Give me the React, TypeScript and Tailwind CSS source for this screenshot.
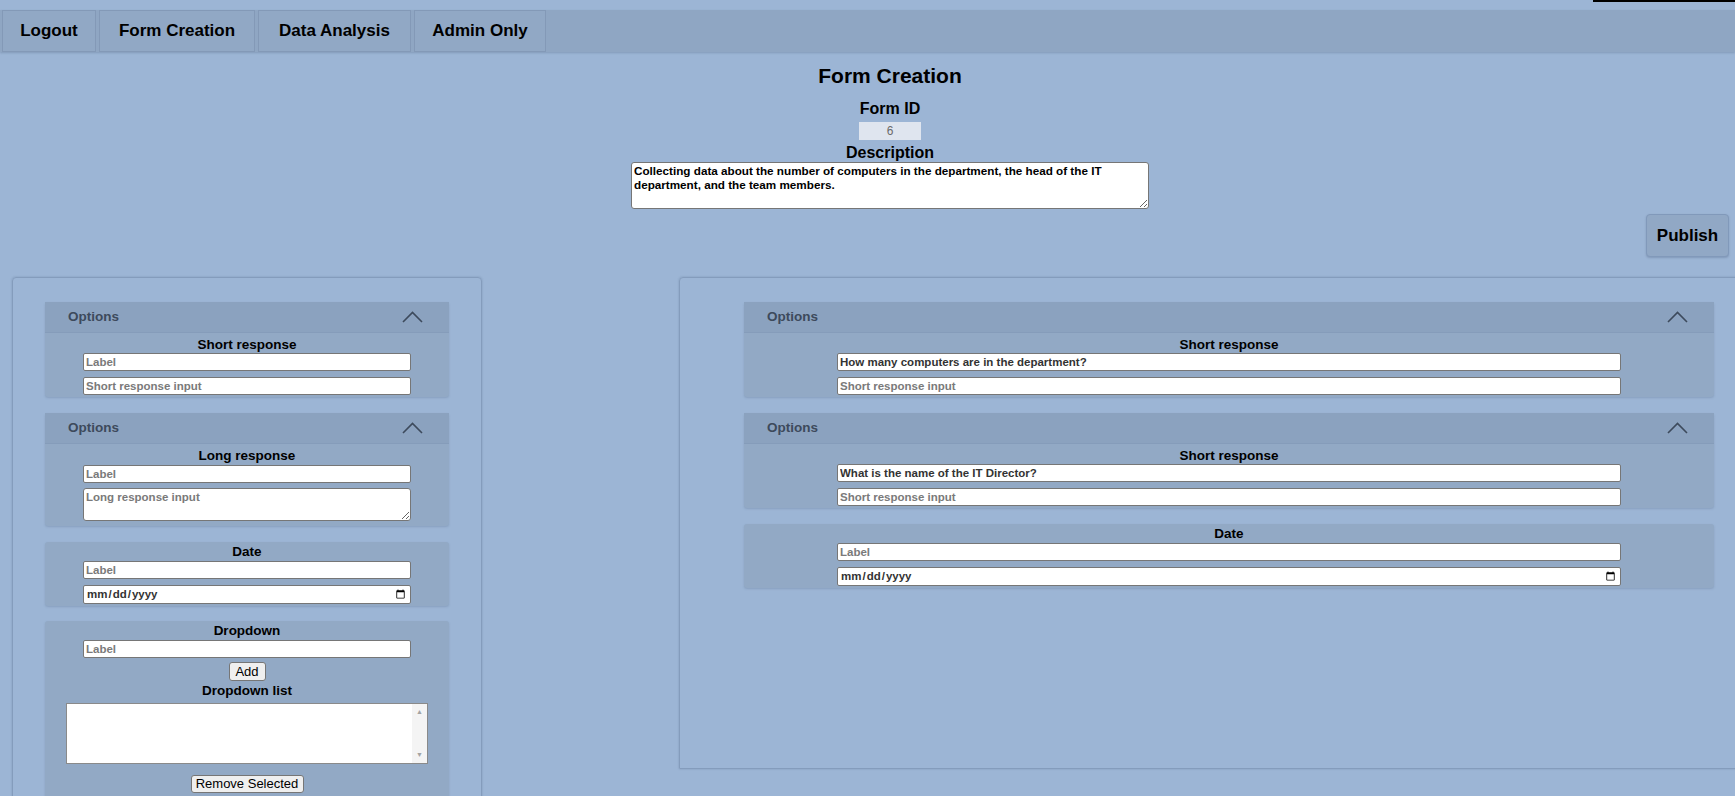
import { useState } from "react";

const navItems = [
  { label: "Logout", w: "w-[94px]" },
  { label: "Form Creation", w: "w-[156px]" },
  { label: "Data Analysis", w: "w-[153px]" },
  { label: "Admin Only", w: "w-[132px]" },
];

const inputCls =
  "block h-[18px] border border-[#767676] rounded-[2px] bg-white px-[2px] text-[11.5px] font-bold text-[#333] placeholder:text-[#7a7a7a] outline-none";

function Chevron() {
  return (
    <svg width="21" height="12" viewBox="0 0 21 12" fill="none">
      <polyline points="1,11 10.5,1.5 20,11" stroke="#3d4a5c" strokeWidth="1.6" />
    </svg>
  );
}

function OptionsHeader() {
  return (
    <div className="flex h-[31px] items-center justify-between bg-[#8ba2bf] pl-[23px] pr-[26px] border-b border-[#859cba]">
      <span className="text-[13.5px] font-bold text-[#3d4a5c]">Options</span>
      <Chevron />
    </div>
  );
}

function Title({ children }: { children: string }) {
  return <div className="h-[16px] text-center text-[13.5px] leading-[16px] font-bold text-black">{children}</div>;
}

function ShortCard({ label, inputW }: { label?: string; inputW: string }) {
  return (
    <div className="bg-[#92a9c5] rounded-[3px] pb-[2px] shadow-[0_1px_2px_rgba(80,100,130,0.25)]">
      <OptionsHeader />
      <div className="mt-[4px]">
        <Title>Short response</Title>
      </div>
      <input className={`${inputCls} ${inputW} mx-auto mt-[0px]`} placeholder="Label" defaultValue={label} />
      <input className={`${inputCls} ${inputW} mx-auto mt-[6px]`} placeholder="Short response input" />
    </div>
  );
}

function DateCard({ inputW }: { inputW: string }) {
  return (
    <div className="bg-[#92a9c5] rounded-[3px] pt-[2px] pb-[2px] shadow-[0_1px_2px_rgba(80,100,130,0.25)]">
      <Title>Date</Title>
      <input className={`${inputCls} ${inputW} mx-auto mt-[1px]`} placeholder="Label" />
      <input type="date" className={`${inputCls} ${inputW} mx-auto mt-[6px] h-[19px] text-[#6b6b6b]`} />
    </div>
  );
}

export default function App() {
  const [desc, setDesc] = useState(
    "Collecting data about the number of computers in the department, the head of the IT department, and the team members."
  );

  return (
    <div className="relative h-[796px] w-full overflow-hidden bg-[#9cb5d5] font-['Liberation_Sans',Arial,sans-serif] text-black">
      <div className="absolute right-0 top-0 h-[2px] w-[142px] bg-black" />

      {/* nav */}
      <div className="pt-[10px]">
        <div className="flex h-[42px] gap-[3px] bg-[#8fa6c3] pl-[2px] shadow-[0_1px_2px_rgba(70,90,120,0.3)]">
          {navItems.map((n) => (
            <button
              key={n.label}
              className={`${n.w} flex h-full items-center justify-center border border-[#8399b7] bg-[#91a8c5] text-[17px] font-bold text-black`}
            >
              {n.label}
            </button>
          ))}
        </div>
      </div>

      {/* header - page content is wider than the window, so it centres at ~890px */}
      <div className="flex w-[1780px] flex-col items-center">
        <h1 className="mt-[12px] h-[24px] text-[21px] leading-[24px] font-bold">Form Creation</h1>
        <div className="mt-[12px] h-[18px] text-[16px] leading-[18px] font-bold">Form ID</div>
        <input
          disabled
          value="6"
          className="mt-[4px] block h-[18px] w-[62px] bg-[#dfe5ef] text-center text-[12px] text-[#6a6a6a]"
        />
        <div className="mt-[4px] h-[18px] text-[16px] leading-[18px] font-bold">Description</div>
        <textarea
          value={desc}
          onChange={(e) => setDesc(e.target.value)}
          className="block h-[47px] w-[518px] rounded-[3px] border border-[#767676] bg-white px-[2px] py-[1px] text-[11.7px] leading-[14px] font-bold text-black outline-none"
        />
      </div>

      <div className="mt-[5px] flex justify-end pr-[6px]">
        <button className="h-[43px] w-[83px] rounded-[4px] border border-[#8199ba] bg-[#91a8c5] text-[17px] font-bold shadow-[0_1px_2px_rgba(70,90,120,0.3)]">
          Publish
        </button>
      </div>

      {/* panels */}
      <div className="mt-[20px] flex items-start">
        <div className="ml-[12px] w-[470px] shrink-0 rounded-t-[4px] border border-[#849cbc] px-[32px] pt-[24px] pb-[20px] shadow-[0_0_2px_rgba(70,90,120,0.35)]">
          <div className="flex flex-col gap-[16px]">
            <ShortCard inputW="w-[328px]" />

            <div className="bg-[#92a9c5] rounded-[3px] pb-[5px] shadow-[0_1px_2px_rgba(80,100,130,0.25)]">
              <OptionsHeader />
              <div className="mt-[4px]">
                <Title>Long response</Title>
              </div>
              <input className={`${inputCls} w-[328px] mx-auto mt-[1px]`} placeholder="Label" />
              <textarea
                className={`${inputCls} w-[328px] mx-auto mt-[5px] h-[33px] rounded-[3px]`}
                placeholder="Long response input"
              />
            </div>

            <DateCard inputW="w-[328px]" />

            <div className="-mt-[1px] bg-[#92a9c5] rounded-[3px] pt-[2px] pb-[10px] shadow-[0_1px_2px_rgba(80,100,130,0.25)]">
              <Title>Dropdown</Title>
              <input className={`${inputCls} w-[328px] mx-auto mt-[1px]`} placeholder="Label" />
              <button className="mx-auto mt-[4px] block h-[19px] w-[37px] rounded-[3px] border border-[#767676] bg-[#efefef] text-[13px] leading-[17px]">
                Add
              </button>
              <div className="mt-[2px]">
                <Title>Dropdown list</Title>
              </div>
              <div className="mx-auto mt-[4px] flex h-[61px] w-[362px] border border-[#8a8a8a] bg-white">
                <div className="flex-1" />
                <div className="flex w-[15px] flex-col items-center justify-between bg-[#f4f4f4] py-[4px] text-[7px] leading-[8px] text-[#a3a3a3]">
                  <span>▲</span>
                  <span>▼</span>
                </div>
              </div>
              <button className="mx-auto mt-[11px] block h-[18px] w-[113px] rounded-[3px] border border-[#767676] bg-[#efefef] text-[13px] leading-[16px]">
                Remove Selected
              </button>
            </div>
          </div>
        </div>

        <div className="ml-[197px] h-[492px] w-[1100px] shrink-0 rounded-tl-[4px] border border-[#849cbc] pl-[64px] pt-[24px] shadow-[0_0_2px_rgba(70,90,120,0.35)]">
          <div className="flex w-[970px] flex-col gap-[16px]">
            <ShortCard label="How many computers are in the department?" inputW="w-[784px]" />
            <ShortCard label="What is the name of the IT Director?" inputW="w-[784px]" />
            <DateCard inputW="w-[784px]" />
          </div>
        </div>
      </div>
    </div>
  );
}
